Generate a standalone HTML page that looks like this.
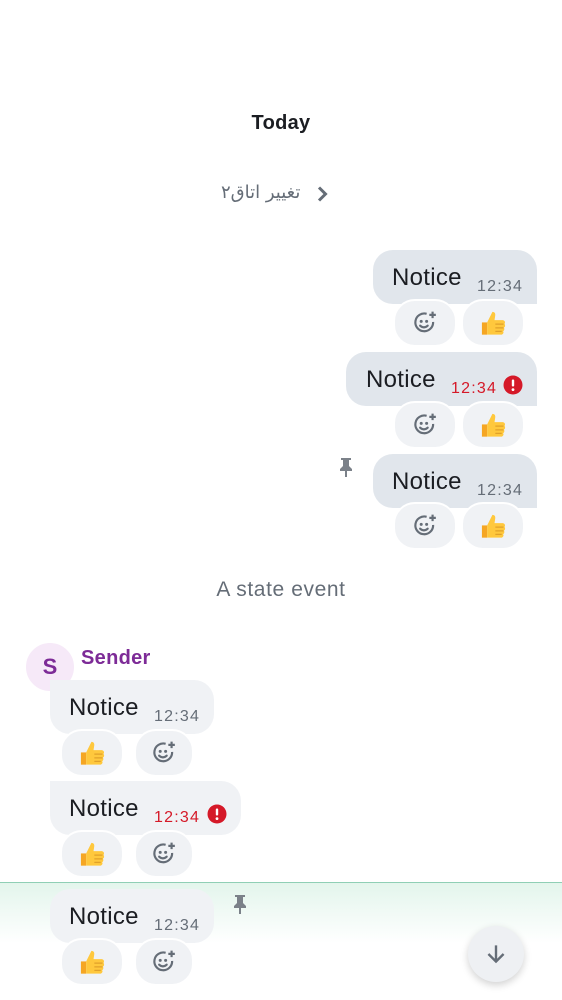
<!DOCTYPE html>
<html><head><meta charset="utf-8"><style>
*{margin:0;padding:0;box-sizing:border-box}
body{width:562px;height:1000px;background:#fff;position:relative;overflow:hidden;font-family:"Liberation Sans","Noto Sans CJK SC",sans-serif}
.a{position:absolute}
.out{position:absolute;background:#e1e6ec;border-radius:20px 20px 0 20px;height:54px}
.in{position:absolute;background:#f0f2f5;border-radius:0 20px 20px 20px;height:54px}
.nt{position:absolute;font-size:24px;color:#1b1d22;top:14px;letter-spacing:.3px}
.tm{position:absolute;font-size:16px;color:#656d77;top:28px;letter-spacing:1.2px}
.red{color:#d51928}
.rx{position:absolute;width:64px;height:48px;background:#f0f2f5;border:2px solid #fff;border-radius:22px;display:flex;align-items:center;justify-content:center}
</style></head><body>
<svg width="0" height="0" style="position:absolute"><defs>
<symbol id="emo" viewBox="0 0 24 24"><path d="M19.5 11A8.2 8.2 0 1 1 13.5 3.5" fill="none" stroke="#656d77" stroke-width="2"/><circle cx="8.5" cy="10.5" r="1.4" fill="#656d77"/><circle cx="13.5" cy="10.5" r="1.4" fill="#656d77"/><path d="M7.5 14.5q3.5 3 7 0" fill="none" stroke="#656d77" stroke-width="2" stroke-linecap="round"/><path d="M19 1.5v6M16 4.5h6" stroke="#656d77" stroke-width="2"/></symbol>
<symbol id="thumb" viewBox="0 0 24 24"><path d="M2.5 11.5h4.5v10.5H2.5z" fill="#f5a623"/><path d="M7 11.5l4.5-9c2.2 0 2.8 1.6 2.3 3.8L13.3 9.5H20.5a2 2 0 0 1 1.3 3.3A2 2 0 0 1 21.3 16a2 2 0 0 1-.6 3A2 2 0 0 1 18.7 22H7z" fill="#ffc83d"/><path d="M14 13h7M14 16.2h7M14 19.2h5.5" stroke="#e0a12a" stroke-width="1.1"/></symbol>
<symbol id="pin" viewBox="0 0 24 24"><path d="M7 3h10v2h-2v6l3 3v2h-5v6h-2v-6H6v-2l3-3V5H7z" fill="#7b8189"/></symbol>
<symbol id="alert" viewBox="0 0 20 20"><circle cx="10" cy="10" r="9.5" fill="#d51928"/><rect x="8.8" y="4.5" width="2.4" height="7" rx="1" fill="#fff"/><circle cx="10" cy="14.6" r="1.4" fill="#fff"/></symbol>
</defs></svg>

<div class="a" style="left:0;width:562px;top:112px;text-align:center;font-size:20px;font-weight:bold;color:#1b1d22;letter-spacing:.3px">Today</div>
<div class="a" style="left:221px;top:182px;font-size:18px;color:#656d77;direction:rtl;font-family:'DejaVu Sans',sans-serif">تغییر اتاق۲</div>
<svg class="a" style="left:312px;top:184px" width="20" height="20" viewBox="0 0 20 20"><path d="M7 3.5l6.5 6.5L7 16.5" fill="none" stroke="#656d77" stroke-width="3"/></svg>

<div class="out" style="left:373px;top:250px;width:164px"><span class="nt" style="left:19px">Notice</span><span class="tm" style="left:104px">12:34</span></div>
<div class="rx" style="left:393px;top:299px"><svg width="26" height="26"><use href="#emo"/></svg></div>
<div class="rx" style="left:461px;top:299px"><svg width="28" height="28"><use href="#thumb"/></svg></div>

<div class="out" style="left:346px;top:352px;width:191px"><span class="nt" style="left:20px">Notice</span><span class="tm red" style="left:105px">12:34</span><svg class="a" style="left:157px;top:23px" width="20" height="20"><use href="#alert"/></svg></div>
<div class="rx" style="left:393px;top:401px"><svg width="26" height="26"><use href="#emo"/></svg></div>
<div class="rx" style="left:461px;top:401px"><svg width="28" height="28"><use href="#thumb"/></svg></div>

<svg class="a" style="left:334px;top:455px" width="24" height="24"><use href="#pin"/></svg>
<div class="out" style="left:373px;top:454px;width:164px"><span class="nt" style="left:19px">Notice</span><span class="tm" style="left:104px">12:34</span></div>
<div class="rx" style="left:393px;top:502px"><svg width="26" height="26"><use href="#emo"/></svg></div>
<div class="rx" style="left:461px;top:502px"><svg width="28" height="28"><use href="#thumb"/></svg></div>

<div class="a" style="left:0;width:562px;top:578px;text-align:center;font-size:21px;color:#656d77;letter-spacing:.6px">A state event</div>

<div class="a" style="left:23px;top:640px;width:54px;height:54px;border-radius:50%;background:#f6e9f8;border:3px solid #fff;color:#7d2b97;font-weight:bold;font-size:22px;display:flex;align-items:center;justify-content:center">S</div>
<div class="a" style="left:81px;top:647px;font-size:20px;font-weight:bold;color:#7d2b97;letter-spacing:.3px">Sender</div>

<div class="in" style="left:50px;top:680px;width:164px"><span class="nt" style="left:19px">Notice</span><span class="tm" style="left:104px">12:34</span></div>
<div class="rx" style="left:60px;top:729px"><svg width="28" height="28"><use href="#thumb"/></svg></div>
<div class="rx" style="left:134px;top:729px;width:60px"><svg width="26" height="26"><use href="#emo"/></svg></div>

<div class="in" style="left:50px;top:781px;width:191px"><span class="nt" style="left:19px">Notice</span><span class="tm red" style="left:104px">12:34</span><svg class="a" style="left:157px;top:23px" width="20" height="20"><use href="#alert"/></svg></div>
<div class="rx" style="left:60px;top:830px"><svg width="28" height="28"><use href="#thumb"/></svg></div>
<div class="rx" style="left:134px;top:830px;width:60px"><svg width="26" height="26"><use href="#emo"/></svg></div>

<div class="a" style="left:0;top:882px;width:562px;height:1px;background:#8fcfb5"></div>
<div class="a" style="left:0;top:883px;width:562px;height:60px;background:linear-gradient(#e3f5ec,#fff)"></div>

<div class="in" style="left:50px;top:889px;width:164px;border-radius:20px"><span class="nt" style="left:19px">Notice</span><span class="tm" style="left:104px">12:34</span></div>
<svg class="a" style="left:228px;top:892px" width="24" height="24"><use href="#pin"/></svg>
<div class="rx" style="left:60px;top:938px"><svg width="28" height="28"><use href="#thumb"/></svg></div>
<div class="rx" style="left:134px;top:938px;width:60px"><svg width="26" height="26"><use href="#emo"/></svg></div>

<div class="a" style="left:468px;top:926px;width:56px;height:56px;border-radius:50%;background:#eef0f3;box-shadow:0 3px 8px rgba(0,0,0,.18);display:flex;align-items:center;justify-content:center"><svg width="26" height="26" viewBox="0 0 24 24"><path d="M12 4v15M5 12l7 7 7-7" fill="none" stroke="#656d77" stroke-width="2.2"/></svg></div>
</body></html>
